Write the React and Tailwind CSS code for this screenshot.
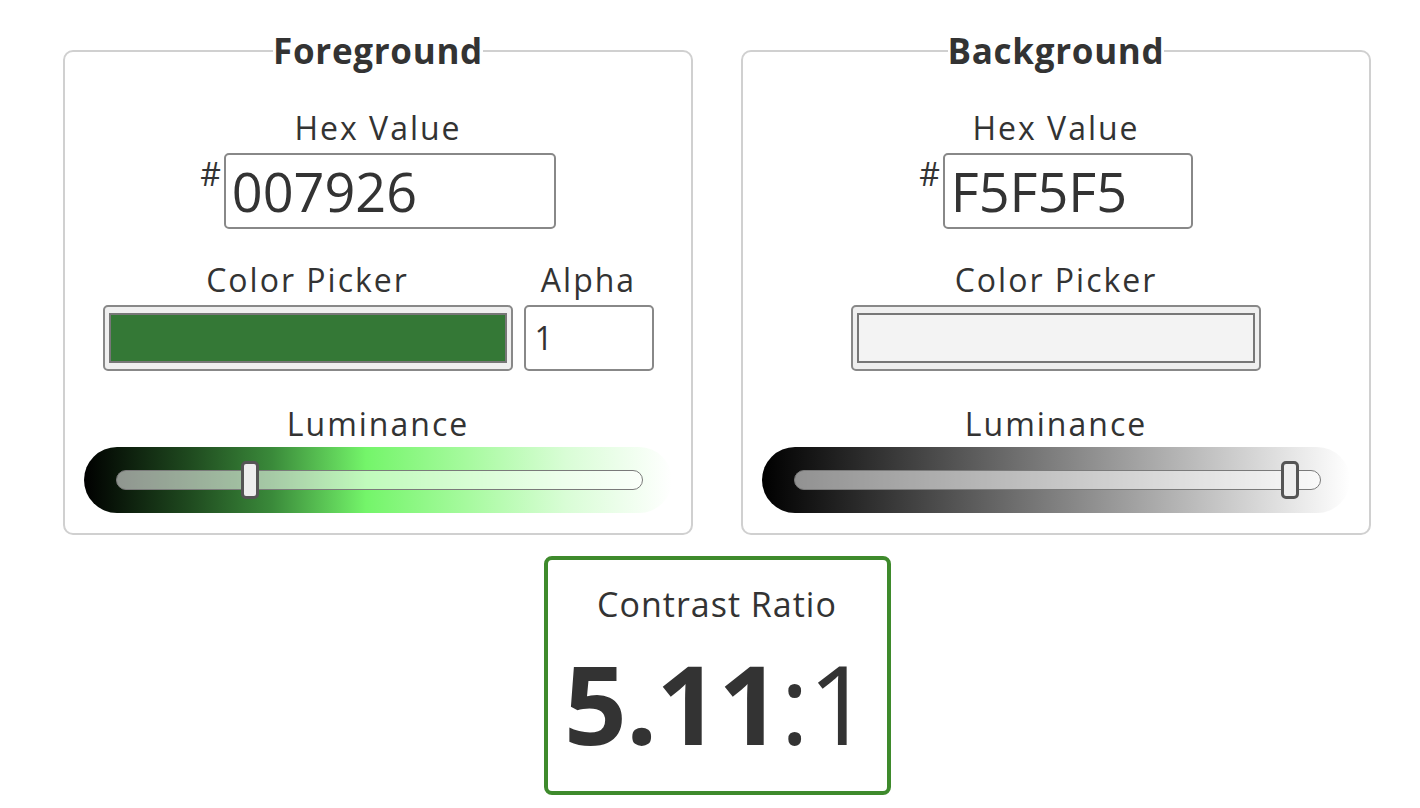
import React from "react";

function Slider({ gradient, thumbLeft }) {
  return (
    <div
      className="w-[588px] h-[66px] rounded-full flex items-center pl-[32px] pr-[29px]"
      style={{ background: gradient }}
    >
      <div className="relative w-full h-[20px] rounded-full border border-[#7a7a7a] bg-[rgba(255,255,255,0.55)]">
        <div
          className="absolute top-[-10px] w-[18px] h-[38px] rounded-[5px] border-[3px] border-[#555] bg-[#eee]"
          style={{ left: thumbLeft }}
        />
      </div>
    </div>
  );
}

function Panel({ title, hex, inputW, swatch, alpha, gradient, thumbLeft }) {
  return (
    <fieldset className="w-[630px] h-[508px] border-2 border-[#d0d0d0] rounded-[10px] flex flex-col items-center">
      <legend className="mx-auto px-0 text-[35px] leading-[48px] font-bold tracking-[0.7px] text-[#333]">{title}</legend>
      <div className="mt-[33px] text-[32px] leading-[40px] tracking-[2px]">Hex Value</div>
      <div className="mt-[5px] flex items-start">
        <span className="text-[32px] leading-[32px] mt-[5px] mr-[3px]">#</span>
        <div
          className="h-[76px] border-2 border-[#888] rounded-[5px] flex items-center pl-[6px] text-[54px] leading-none"
          style={{ width: inputW }}
        >
          {hex}
        </div>
      </div>
      <div className="mt-[31px] flex gap-[11px] items-end">
        <div className="flex flex-col items-center">
          <div className="text-[32px] leading-[40px] tracking-[2px]">Color Picker</div>
          <div className="mt-[5px] w-[410px] h-[66px] bg-[#efefef] border-2 border-[#888] rounded-[5px] px-[4px] py-[6px]">
            <div className="w-full h-full border-2 border-[#777]" style={{ background: swatch }} />
          </div>
        </div>
        {alpha && (
          <div className="flex flex-col items-center">
            <div className="text-[32px] leading-[40px] tracking-[2px]">Alpha</div>
            <div className="mt-[5px] w-[130px] h-[66px] border-2 border-[#888] rounded-[5px] flex items-center pl-[9px] text-[32px]">
              1
            </div>
          </div>
        )}
      </div>
      <div className="mt-[33px] text-[32px] leading-[40px] tracking-[2px]">Luminance</div>
      <div className="mt-[3px]">
        <Slider gradient={gradient} thumbLeft={thumbLeft} />
      </div>
    </fieldset>
  );
}

export default function App() {
  return (
    <div className="w-[1420px] h-[808px] bg-white text-[#333] overflow-hidden" style={{ fontFamily: '"Open Sans", sans-serif' }}>
      <div className="pt-[27px] pl-[63px] flex gap-[48px]">
        <Panel
          title="Foreground"
          hex="007926"
          inputW={332}
          swatch="#347836"
          alpha
          gradient="linear-gradient(to right, #000 0%, #1f4a1f 18%, #3a8a3a 32%, #74f56a 48%, #a6fa9e 65%, #d9fdd6 82%, #fff 100%)"
          thumbLeft={124}
        />
        <Panel
          title="Background"
          hex="F5F5F5"
          inputW={250}
          swatch="#f3f3f3"
          gradient="linear-gradient(to right, #000 0%, #fff 100%)"
          thumbLeft={486}
        />
      </div>
      <div className="flex justify-center mt-[21px] pl-[14px]">
        <div className="w-[347px] h-[239px] border-4 border-[#3e8a2c] rounded-[8px] flex flex-col items-center">
          <div className="mt-[22px] text-[34px] leading-[44px] tracking-[1px]">Contrast Ratio</div>
          <div className="mt-[16px] text-[110px] leading-[120px] tracking-[-1px]">
            <span className="font-bold">5.11</span>:1
          </div>
        </div>
      </div>
    </div>
  );
}
